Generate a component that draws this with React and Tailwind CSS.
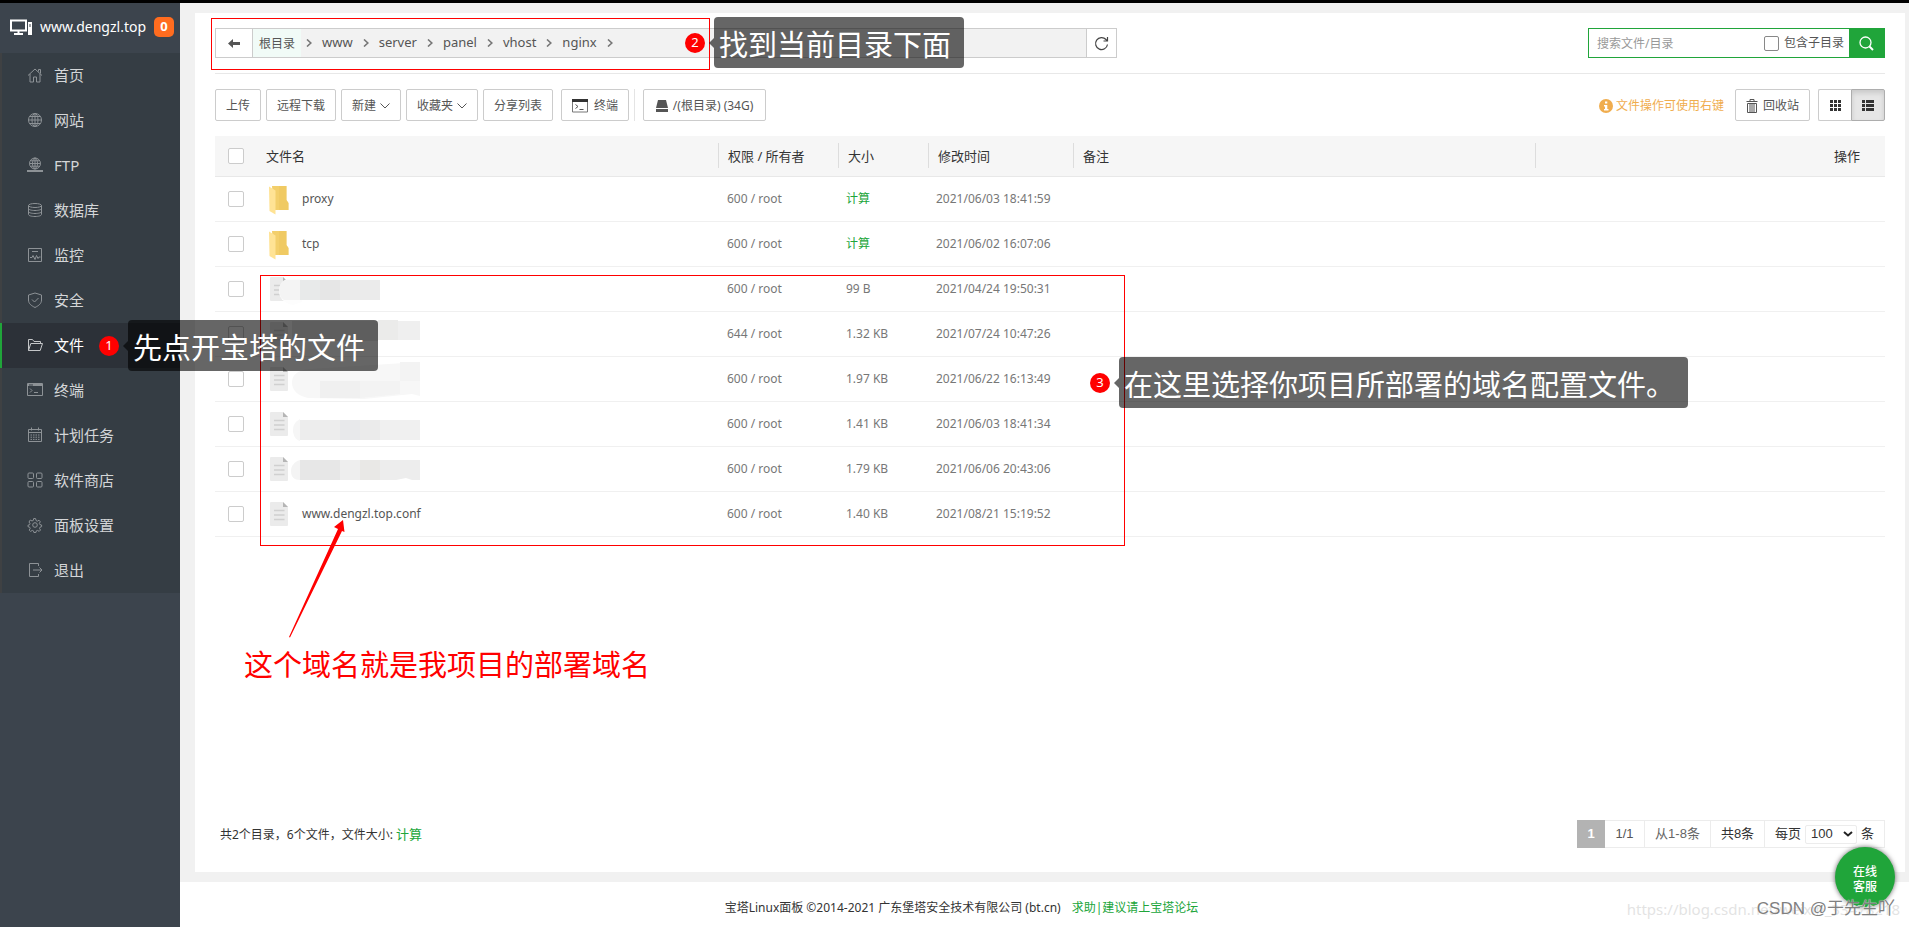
import { useState } from 'react';

const NAV_ITEMS = [
  { label: '首页', icon: 'home' },
  { label: '网站', icon: 'globe' },
  { label: 'FTP', icon: 'ftp' },
  { label: '数据库', icon: 'database' },
  { label: '监控', icon: 'monitor' },
  { label: '安全', icon: 'shield' },
  { label: '文件', icon: 'folder' },
  { label: '终端', icon: 'terminal' },
  { label: '计划任务', icon: 'calendar' },
  { label: '软件商店', icon: 'apps' },
  { label: '面板设置', icon: 'gear' },
  { label: '退出', icon: 'exit' },
];

const PATHS = ['www', 'server', 'panel', 'vhost', 'nginx'];

const FILES = [
  { type: 'dir', name: 'proxy', owner: '600 / root', time: '2021/06/03 18:41:59' },
  { type: 'dir', name: 'tcp', owner: '600 / root', time: '2021/06/02 16:07:06' },
  { type: 'file', mosaic: 0, owner: '600 / root', size: '99 B', time: '2021/04/24 19:50:31' },
  { type: 'file', mosaic: 1, owner: '644 / root', size: '1.32 KB', time: '2021/07/24 10:47:26' },
  { type: 'file', mosaic: 2, owner: '600 / root', size: '1.97 KB', time: '2021/06/22 16:13:49' },
  { type: 'file', mosaic: 3, owner: '600 / root', size: '1.41 KB', time: '2021/06/03 18:41:34' },
  { type: 'file', mosaic: 4, owner: '600 / root', size: '1.79 KB', time: '2021/06/06 20:43:06' },
  { type: 'file', name: 'www.dengzl.top.conf', owner: '600 / root', size: '1.40 KB', time: '2021/08/21 15:19:52' },
];

const NAV_SHAPES = {
  home: <path d="M1 8.5 8 2l7 6.500M3 7v8h3.500v-5h3v5H13V7M11.500 4.500V2.500h2v4" />,
  globe: (
    <>
      <circle cx="8" cy="8" r="6.500" />
      <ellipse cx="8" cy="8" rx="3" ry="6.500" />
      <path d="M8 1.500v13M1.500 8h13M2.500 4.500h11M2.500 11.500h11" />
    </>
  ),
  ftp: (
    <>
      <circle cx="8" cy="6.500" r="5.500" />
      <ellipse cx="8" cy="6.500" rx="2.500" ry="5.500" />
      <path d="M8 1v11M2.500 6.500h11M3.500 3.800h9M3.500 9.200h9" />
      <path d="M0 14h16" strokeWidth="2" />
    </>
  ),
  database: (
    <>
      <ellipse cx="8" cy="3.500" rx="6.500" ry="2" />
      <path d="M1.500 3.500v9c0 1.200 3 2 6.500 2s6.500-.8 6.500-2v-9M1.500 6.500c0 1.200 3 2 6.500 2s6.500-.8 6.500-2M1.500 9.500c0 1.200 3 2 6.500 2s6.500-.8 6.500-2" />
    </>
  ),
  monitor: (
    <>
      <path d="M1.500 1.500h13v13h-13zM5 4.500h6" />
      <path d="M3 10.500h2l1-2 2 4 1.500-4 1.500 3 1-1.500h1.500" />
    </>
  ),
  shield: <path d="M8 1 14.500 3v5c0 3.500-2.500 5.500-6.500 7.500C4 13.500 1.500 11.500 1.500 8V3zM5 7.500l2.500 2.500L11.500 6" />,
  folder: <path d="M1.500 13.500v-11h4l1.500 2h6.500v2M1.500 13.500l2.300-7h11.700l-2.300 7z" />,
  terminal: (
    <>
      <path d="M.5 1.500h15v12H.5zM3 6.500l2 2-2 2M7 10.500h4" />
      <path d="M.5 3h15" strokeWidth="2" strokeDasharray="2 1 1 1 20" />
    </>
  ),
  calendar: (
    <>
      <path d="M1.500 2.500h13v12h-13zM4.500.5v3M11.500.5v3M1.500 5.500h13" />
      <path d="M3.500 8h9M3.500 10.200h9M3.500 12.400h9" strokeDasharray="1.500 1" />
    </>
  ),
  apps: (
    <>
      <rect x="1" y="1" width="5.500" height="5.500" rx="1" />
      <rect x="9.500" y="1" width="5.500" height="5.500" rx="1" />
      <rect x="1" y="9.500" width="5.500" height="5.500" rx="1" />
      <rect x="9.500" y="9.500" width="5.500" height="5.500" rx="1" />
    </>
  ),
  gear: (
    <>
      <circle cx="8" cy="8" r="2.300" />
      <path d="m6.700 1.500-.4 1.900-1.300.6-1.700-1L2 5l1 1.600-.5 1.200-1.500.4v1.500l1.700.5.5 1.300-1 1.600 1.400 1.300 1.700-1 1.200.5.4 1.600h2l.4-1.600 1.300-.5 1.600 1 1.300-1.400-1-1.600.5-1.200 1.600-.5V8l-1.700-.4-.6-1.200 1-1.600L12 3.200l-1.700 1-1.200-.6-.5-2z" />
    </>
  ),
  exit: <path d="M11.500 4V1.500h-9v13h9V12M6 8h9M12.500 5.500 15 8l-2.500 2.500" />,
};

function NavIcon({ name }) {
  return (
    <svg className="h-4 w-4 shrink-0" viewBox="0 0 16 16" fill="none" stroke="currentColor" strokeWidth="1">
      {NAV_SHAPES[name]}
    </svg>
  );
}

function TerminalIcon() {
  return (
    <svg className="h-[14px] w-4" viewBox="0 0 16 14" fill="none" stroke="#777">
      <path d="M.5.500h15v12.500H.5z" strokeWidth="1" />
      <path d="M0 1.500h16" stroke="#333" strokeWidth="3" />
      <path d="M3.500 5.500l2.500 2-2.500 2M7.500 10.500h4" stroke="#555" />
    </svg>
  );
}

function DownIcon() {
  return (
    <svg className="h-[6px] w-[10px]" viewBox="0 0 10 6" fill="none" stroke="#555">
      <path d="M.5.500 5 5 9.500.500" />
    </svg>
  );
}

function FolderIcon() {
  return (
    <svg className="mt-[3px] h-[29px] w-5" viewBox="0 0 20 29">
      <path d="M3 0h14.500v14l2 3v7H5z" fill="#f3cf6b" />
      <path d="M10 0h7.500v14l2 3v7H10z" fill="#eec55c" opacity=".5" />
      <path d="M0 .5 6.500 4.500v24L.500 25z" fill="#ffe395" />
    </svg>
  );
}

function FileIcon() {
  return (
    <svg className="ml-px h-6 w-[18px]" viewBox="0 0 18 24">
      <path d="M1 0h12l5 5v18a1 1 0 0 1-1 1H1a1 1 0 0 1-1-1V1a1 1 0 0 1 1-1z" fill="#ebebeb" />
      <path d="M13 0v5h5z" fill="#b5b5b5" />
      <path d="M4 8.500h10.500M4 13h10.500M4 17.500h10.500" stroke="#d0d0d0" strokeWidth="1.500" />
    </svg>
  );
}

// Blurred-out file names, drawn as rows of grey tiles
const MOSAICS = [
  <>
    <path d="M24 12H10C4 13 1 19 1 24s3 12 14 14l9-3z" fill="#fdfdfd" />
    <path d="M22 13H8C2 14 1 21 1 23s1 8 5 10h16z" fill="#f4f4f4" />
    <path d="M22 13h20v20H22z" fill="#e8eaea" />
    <path d="M42 13h20v20H42z" fill="#e6e6e6" />
    <path d="M62 13h40v20H62z" fill="#ebebeb" />
  </>,
  <>
    <path d="M14 9h86v20H14z" fill="#ececec" />
    <path d="M100 8h20v20h-20z" fill="#ebebea" />
    <path d="M120 9h22v19h-22z" fill="#efefef" />
  </>,
  <>
    <path d="M142 5v34l-8-2-48 5-56-1c-10-2-16-8-16-15 0-8 5-13 18-14z" fill="#f7f7f7" />
    <path d="M42 24h40v17H42z" fill="#f0f0f0" />
    <path d="M82 24h40v13l-40 4z" fill="#f3f3f3" />
    <path d="M122 5h20v19h-20z" fill="#f3f3f3" />
  </>,
  <>
    <path d="M22 17c-5 3-7 6-7 11 0 6 3 10 7 11z" fill="#f6f6f6" />
    <path d="M22 18h40v20H22z" fill="#ededed" />
    <path d="M62 18h20v20H62z" fill="#e8e9eb" />
    <path d="M82 18h20v20H82z" fill="#ebebeb" />
    <path d="M102 18h40v20h-40z" fill="#f0f0f0" />
  </>,
  <>
    <path d="M22 13c-6 2-9 6-9 11 0 6 3 9 9 9z" fill="#f4f4f4" />
    <path d="M22 13h40v20H22z" fill="#e7e7e7" />
    <path d="M62 13h20v20H62z" fill="#eee" />
    <path d="M82 13h20v20H82z" fill="#e9e8e6" />
    <path d="M102 13h40v20h-8l-6-2-10 2h-16z" fill="#ededed" />
  </>,
];

function Mosaic({ index }) {
  return (
    <svg className="-ml-6 h-11 w-[142px]" viewBox="0 0 142 44">
      {MOSAICS[index]}
    </svg>
  );
}

function Checkbox({ label }) {
  return (
    <input
      type="checkbox"
      aria-label={label}
      className="block h-4 w-4 appearance-none rounded-xs border border-[#ccc] bg-white checked:bg-[#20a53a]"
    />
  );
}

function ToolButton({ children, className = '' }) {
  return (
    <button
      type="button"
      className={`flex h-8 items-center justify-center whitespace-nowrap rounded-xs border border-[#ccc] bg-white px-[10px] pt-px text-xs text-[#555] ${className}`}
    >
      {children}
    </button>
  );
}

function HeadCell({ children }) {
  return (
    <th className="p-0 text-left font-normal">
      <div className="flex h-[25px] items-center border-l border-[#ddd] pl-[9px] pt-[2px]">{children}</div>
    </th>
  );
}

function Sidebar() {
  return (
    <aside className="w-[180px] shrink-0 bg-[#3c444d]">
      <div className="flex h-[50px] items-center pb-[10px] pl-[10px] pt-2 text-white">
        <svg className="h-4 w-[23px] shrink-0" viewBox="0 0 23 16" fill="none" stroke="#fff">
          <path d="M1 1.500h15v10H1z" strokeWidth="2" />
          <path d="M4 15h9M8.500 12v2" strokeWidth="2" />
          <path d="M18 3h4v13h-4z" fill="#fff" stroke="none" />
          <path d="M20 5v3" stroke="#3c444d" />
        </svg>
        <span className="ml-[7px] w-[108px] whitespace-nowrap text-sm">www.dengzl.top</span>
        <span className="ml-[6px] flex h-5 w-5 items-center justify-center rounded-[5px] bg-[#ff6c1f] text-[13px] font-bold">
          0
        </span>
      </div>
      <nav>
        <ul className="bg-[#353d44]">
          {NAV_ITEMS.map((item) => {
            const active = item.icon === 'folder';
            return (
              <li key={item.label}>
                <a
                  href="#"
                  className={`flex h-[45px] items-center border-l-2 pb-px pl-[25px] text-[15px] ${
                    active ? 'border-[#20a53a] bg-[#2c3138] text-white' : 'border-[#3f4143] text-[#d4d6d8]'
                  }`}
                >
                  <span className={active ? 'text-[#c4c6c8]' : 'text-[#8d9296]'}>
                    <NavIcon name={item.icon} />
                  </span>
                  <span className="ml-[11px]">{item.label}</span>
                </a>
              </li>
            );
          })}
        </ul>
      </nav>
    </aside>
  );
}

function PathArrow() {
  return (
    <svg className="ml-[5px] mr-[10px] h-2 w-[6px]" viewBox="0 0 6 8" fill="none" stroke="#777" strokeWidth="1.600">
      <path d="M1 .5 4.800 4 1 7.500" />
    </svg>
  );
}

function PathBar() {
  return (
    <div className="flex h-[30px] w-[902px] border border-[#ccc] bg-[#f2f2f2] text-[13px] text-[#555]">
      <button type="button" aria-label="返回" className="flex w-[37px] items-center justify-center border-r border-[#ccc] bg-white">
        <svg className="h-[9px] w-3" viewBox="0 0 12 9" fill="#555">
          <path d="M0 4.500 5 0v3h7v3H5v3z" />
        </svg>
      </button>
      <div className="flex flex-1 items-center">
        <a href="#" className="flex h-full items-center bg-[#f1fbf7] pl-[6px] pr-[6px] pt-px text-xs">
          根目录
        </a>
        <PathArrow />
        {PATHS.map((path) => (
          <span key={path} className="flex items-center">
            <a href="#" className="pr-[5px]">
              {path}
            </a>
            <PathArrow />
          </span>
        ))}
      </div>
      <button type="button" aria-label="刷新" className="flex w-[30px] items-center justify-center border-l border-[#ccc] bg-white">
        <svg className="h-[15px] w-[15px]" viewBox="0 0 15 15" fill="none" stroke="#444" strokeWidth="1.200">
          <path d="M13.500 8.500A6 6 0 1 1 12 3.500l1 1M13.500 1v4h-4" />
        </svg>
      </button>
    </div>
  );
}

function SearchBox() {
  return (
    <form className="flex h-[30px] w-[297px] border border-[#20a53a]" onSubmit={(e) => e.preventDefault()}>
      <input
        type="text"
        aria-label="搜索文件/目录"
        placeholder="搜索文件/目录"
        className="min-w-0 flex-1 pl-2 pt-px text-xs placeholder:text-[#999] outline-none"
      />
      <label className="flex items-center gap-[5px] pr-[5px] text-xs text-[#555]">
        <input type="checkbox" className="h-[15px] w-[15px] appearance-none rounded-xs border border-[#888] bg-white" />
        包含子目录
      </label>
      <button type="submit" aria-label="搜索" className="flex w-[35px] items-center justify-center bg-[#20a53a]">
        <svg className="h-[15px] w-[15px]" viewBox="0 0 15 15" fill="none" stroke="#fff">
          <circle cx="6.500" cy="6.500" r="5.500" strokeWidth="1.300" />
          <path d="m10.500 10.500 3.500 3.500" strokeWidth="2" />
        </svg>
      </button>
    </form>
  );
}

function Toolbar() {
  return (
    <div className="flex items-center justify-between py-[15px]">
      <div className="flex items-center gap-[5px]">
        <ToolButton>上传</ToolButton>
        <ToolButton>远程下载</ToolButton>
        <ToolButton className="gap-1">
          新建
          <DownIcon />
        </ToolButton>
        <ToolButton className="gap-1">
          收藏夹
          <DownIcon />
        </ToolButton>
        <ToolButton>分享列表</ToolButton>
        <ToolButton className="ml-[3px] gap-[6px]">
          <TerminalIcon />
          终端
        </ToolButton>
        <span className="mr-[3px] h-8 w-px bg-[#e4e4e4]" />
        <ToolButton className="w-[123px] gap-[5px]">
          <svg className="h-3 w-3" viewBox="0 0 12 12" fill="#555">
            <path d="M2 0h8l2 8H0zM0 9h12v3H0z" />
          </svg>
          /(根目录) (34G)
        </ToolButton>
      </div>
      <div className="flex items-center">
        <span className="flex items-center gap-[3px] pr-[11px] pt-[2px] text-xs text-[#f0ad4e]">
          <svg className="h-[14px] w-[14px]" viewBox="0 0 14 14">
            <circle cx="7" cy="7" r="7" fill="#f0ad4e" />
            <path d="M6 2.500h2.300v2H6zM5 6h3.300v4H9.500v1.500H5V10h1V7.500H5z" fill="#fff" />
          </svg>
          文件操作可使用右键
        </span>
        <ToolButton className="gap-[5px]">
          <svg className="h-[14px] w-3" viewBox="0 0 12 14" fill="none" stroke="#555">
            <path d="M.5 2.500h11M4 2.500V.500h4v2M1.500 4.500v9h9v-9zM4 4.500v9M6 4.500v9M8 4.500v9" />
          </svg>
          回收站
        </ToolButton>
        <div className="ml-2 flex h-8">
          <button type="button" aria-label="图标视图" className="flex w-[33px] items-center justify-center rounded-l-xs border border-r-0 border-[#ccc]">
            <svg className="h-[11px] w-[11px]" viewBox="0 0 11 11" fill="#333">
              <path d="M0 0h3v3H0zM4 0h3v3H4zM8 0h3v3H8zM0 4h3v3H0zM4 4h3v3H4zM8 4h3v3H8zM0 8h3v3H0zM4 8h3v3H4zM8 8h3v3H8z" />
            </svg>
          </button>
          <button type="button" aria-label="列表视图" className="flex w-[34px] items-center justify-center rounded-r-xs border border-[#adadad] bg-[#e6e6e6] shadow-[inset_0_3px_5px_rgba(0,0,0,0.125)]">
            <svg className="h-[11px] w-3" viewBox="0 0 12 11" fill="#333">
              <path d="M0 0h3v3H0zM4 0h8v3H4zM0 4h3v3H0zM4 4h8v3H4zM0 8h3v3H0zM4 8h8v3H4z" />
            </svg>
          </button>
        </div>
      </div>
    </div>
  );
}

function FileTable() {
  return (
    <table className="w-full table-fixed border-collapse text-xs text-[#777]">
      <colgroup>
        <col className="w-[51px]" />
        <col />
        <col className="w-[120px]" />
        <col className="w-[90px]" />
        <col className="w-[145px]" />
        <col className="w-[462px]" />
        <col className="w-[350px]" />
      </colgroup>
      <thead>
        <tr className="h-10 border-b border-[#e8e8e8] bg-[#f6f6f6] text-[13px] text-[#333]">
          <th className="p-0 pl-[13px]">
            <Checkbox label="全选" />
          </th>
          <th className="p-0 pt-[2px] text-left font-normal">文件名</th>
          <HeadCell>权限 / 所有者</HeadCell>
          <HeadCell>大小</HeadCell>
          <HeadCell>修改时间</HeadCell>
          <HeadCell>备注</HeadCell>
          <th className="p-0 font-normal">
            <div className="flex h-[25px] items-center justify-end border-l border-[#ddd] pr-[25px] pt-[2px]">操作</div>
          </th>
        </tr>
      </thead>
      <tbody>
        {FILES.map((file) => (
          <tr key={file.time} className="h-[45px] border-b border-[#f0f0f0]">
            <td className="p-0 pl-[13px]">
              <Checkbox label={file.name || '文件'} />
            </td>
            <td className="p-0">
              <div className="flex h-11 items-center">
                <span className="flex w-9 shrink-0 pl-[3px]">{file.type === 'dir' ? <FolderIcon /> : <FileIcon />}</span>
                {file.name ? (
                  <a href="#" className="pt-px text-[#555]">
                    {file.name}
                  </a>
                ) : (
                  <Mosaic index={file.mosaic} />
                )}
              </div>
            </td>
            <td className="p-0 pl-[9px] pt-px">{file.owner}</td>
            <td className="p-0 pl-2 pt-px">
              {file.size || (
                <a href="#" className="text-[#20a53a]">
                  计算
                </a>
              )}
            </td>
            <td className="p-0 pl-2 pt-px">{file.time}</td>
            <td />
            <td />
          </tr>
        ))}
      </tbody>
    </table>
  );
}

function Pagination() {
  const [pageSize, setPageSize] = useState('100');

  return (
    <div className="flex h-7 border border-l-0 border-[#ececec] font-['Liberation_Sans','Noto_Sans_CJK_SC',sans-serif] text-[13px] text-[#333]">
      <span className="-my-px flex w-7 items-center justify-center bg-[#b3b3b3] font-bold text-white">1</span>
      <span className="flex w-10 items-center justify-center border-r border-[#ececec] text-[#555]">1/1</span>
      <span className="flex w-[66px] items-center justify-center border-r border-[#ececec] text-[#666]">从1-8条</span>
      <span className="flex w-[54px] items-center justify-center border-r border-[#ececec]">共8条</span>
      <label className="flex w-[119px] items-center justify-center gap-1">
        每页
        <span className="relative flex items-center">
          <select
            value={pageSize}
            onChange={(e) => setPageSize(e.target.value)}
            className="h-[19px] w-[52px] appearance-none rounded-xs border border-[#ececec] bg-white pb-px pl-[5px] leading-4"
          >
            <option>100</option>
            <option>200</option>
            <option>500</option>
          </select>
          <svg className="pointer-events-none absolute right-[4px] h-[6px] w-[10px]" viewBox="0 0 10 6" fill="none" stroke="#222" strokeWidth="2">
            <path d="m1 1 4 3.500L9 1" />
          </svg>
        </span>
        条
      </label>
    </div>
  );
}

function Marker({ number, text, className }) {
  return (
    <div className={`absolute flex items-center ${className}`}>
      <span className="flex h-5 w-5 items-center justify-center rounded-full bg-[#f00] text-[13px] text-white">{number}</span>
      <span className="ml-1 h-0 w-0 border-y-[5px] border-r-[5px] border-y-transparent border-r-black/60" />
      <span className="flex h-[51px] items-center whitespace-nowrap rounded-sm bg-black/60 pl-[5px] pr-[13px] pt-[3px] text-[29px] leading-none text-white">
        {text}
      </span>
    </div>
  );
}

// Tutorial notes drawn on top of the panel
function Annotations() {
  return (
    <div className="pointer-events-none absolute inset-0 overflow-hidden">
      <div className="absolute left-[211px] top-[18px] h-[52px] w-[499px] border border-[#f00]" />
      <div className="absolute left-[260px] top-[275px] h-[271px] w-[865px] border border-[#f00]" />
      <Marker number={1} text="先点开宝塔的文件" className="left-[99px] top-[320px]" />
      <Marker number={2} text="找到当前目录下面" className="left-[685px] top-[17px]" />
      <Marker number={3} text="在这里选择你项目所部署的域名配置文件。" className="left-[1090px] top-[357px]" />
      <svg className="absolute left-[285px] top-[518px] h-[124px] w-[64px]" viewBox="0 0 64 124" fill="#f00">
        <path d="M58 2 49 9l4 2L4 119l1 .5L57 13l2.500 1z" />
      </svg>
      <p className="absolute left-[244px] top-[645px] whitespace-nowrap text-[29px] leading-10 text-[#f00]">
        这个域名就是我项目的部署域名
      </p>
    </div>
  );
}

export default function App() {
  return (
    <div className="relative flex min-h-screen flex-col bg-white font-['Noto_Sans','Noto_Sans_CJK_SC',sans-serif] text-[#333]">
      <div className="h-[3px] bg-black" />
      <div className="flex flex-1">
        <Sidebar />
        <div className="flex min-w-0 flex-1 flex-col">
          <main className="flex flex-1 flex-col bg-[#f1f1f1] py-[10px] pl-[15px] pr-1">
            <div className="flex flex-1 flex-col bg-white px-5 pb-6 pt-[15px]">
              <div className="flex justify-between border-b border-[#e8e8e8] pb-[15px]">
                <PathBar />
                <SearchBox />
              </div>
              <Toolbar />
              <FileTable />
              <div className="mt-auto flex items-center justify-between">
                <p className="pl-[5px] pt-[2px] text-xs">
                  共2个目录，6个文件，文件大小:{' '}
                  <a href="#" className="text-[13px] text-[#20a53a]">
                    计算
                  </a>
                </p>
                <Pagination />
              </div>
            </div>
          </main>
          <footer className="flex h-[45px] items-center justify-center gap-[11px] pr-[166px] pt-[6px] text-xs">
            <span>宝塔Linux面板 ©2014-2021 广东堡塔安全技术有限公司 (bt.cn)</span>
            <a href="#" className="text-[#20a53a]">
              求助|建议请上宝塔论坛
            </a>
          </footer>
        </div>
      </div>

      <Annotations />

      <button
        type="button"
        className="absolute bottom-5 right-[14px] flex h-[60px] w-[60px] items-center justify-center rounded-full bg-[#20a53a] pt-1 text-xs leading-[15px] text-white shadow-[0_0_5px_rgba(0,0,0,0.6)]"
      >
        <span className="w-6 font-medium">在线客服</span>
      </button>
      <span className="absolute bottom-[7px] right-[9px] text-[15px] text-[#dcdcdc]/80">https://blog.csdn.net/weixin_33478218</span>
      <span className="absolute bottom-[6px] right-[14px] font-['Liberation_Sans','Noto_Sans_CJK_SC',sans-serif] text-[17px] text-[#808080] [text-shadow:0_0_1px_#fff]">
        CSDN @于先生吖
      </span>
    </div>
  );
}
